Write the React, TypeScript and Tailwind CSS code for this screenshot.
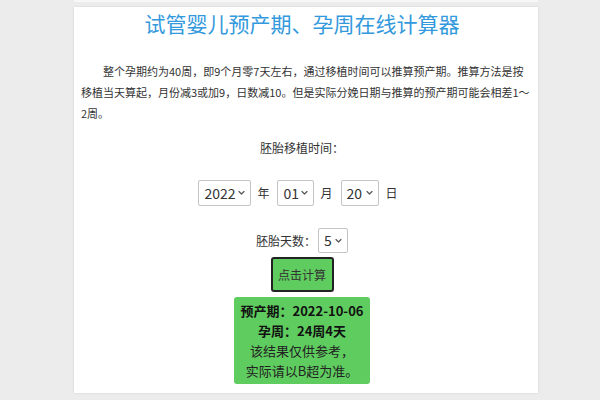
import { useState } from "react";

const cjk = "font-['Noto_Sans_CJK_SC','Microsoft_YaHei',sans-serif]";

function Chevron() {
  return (
    <svg width="7" height="5" viewBox="0 0 7 5" className="pointer-events-none absolute right-[6px] top-1/2 -translate-y-1/2">
      <path d="M1 1l2.5 2.5L6 1" fill="none" stroke="#555" strokeWidth="1.2" strokeLinecap="round" strokeLinejoin="round" />
    </svg>
  );
}

interface DropdownProps {
  value: string;
  options: string[];
  width: string;
  height: string;
  onChange: (value: string) => void;
}

function Dropdown({ value, options, width, height, onChange }: DropdownProps) {
  return (
    <span className={`relative inline-block ${width} ${height}`}>
      <select
        value={value}
        onChange={(e) => onChange(e.target.value)}
        className={`h-full w-full appearance-none rounded-[2px] border border-[#c4c4c4] bg-white pl-[5px] text-[14px] text-[#333] outline-none ${cjk}`}
      >
        {options.map((opt) => (
          <option key={opt} value={opt}>
            {opt}
          </option>
        ))}
      </select>
      <Chevron />
    </span>
  );
}

const pad = (n: number) => String(n).padStart(2, "0");

export default function App() {
  const [year, setYear] = useState("2022");
  const [month, setMonth] = useState("01");
  const [day, setDay] = useState("20");
  const [embryoDays, setEmbryoDays] = useState("5");

  const years = ["2020", "2021", "2022", "2023"];
  const months = Array.from({ length: 12 }, (_, i) => pad(i + 1));
  const days = Array.from({ length: 31 }, (_, i) => pad(i + 1));

  return (
    <div className={`h-[400px] w-[600px] overflow-hidden bg-[#ececec] ${cjk}`}>
      <div className="ml-[74px] h-[2px] w-[464px] bg-[#f7f7f7]" />
      <div className="ml-[74px] mt-[5px] h-[386px] w-[464px] bg-white pl-[7px] pr-[15px] shadow-[0_0_2px_rgba(0,0,0,0.12)]">
        <h1 className="text-center text-[21px] font-normal leading-[32px] text-[#3399dd]">
          试管婴儿预产期、孕周在线计算器
        </h1>

        <p className="mt-[22px] -mr-[8px] indent-[22px] text-[11px] leading-[21px] text-[#333]">
          整个孕期约为40周，即9个月零7天左右，通过移植时间可以推算预产期。推算方法是按
          <br />
          移植当天算起，月份减3或加9，日数减10。但是实际分娩日期与推算的预产期可能会相差1～
          <br />
          2周。
        </p>

        <p className="mt-[14px] text-center text-[12px] leading-[20px] text-[#333]">胚胎移植时间：</p>

        <div className="mt-[22px] flex items-center justify-center pr-[8px] text-[12px] text-[#333]">
          <Dropdown value={year} options={years} width="w-[53px]" height="h-[26px]" onChange={setYear} />
          <span className="ml-[6px] mr-[8px]">年</span>
          <Dropdown value={month} options={months} width="w-[37px]" height="h-[26px]" onChange={setMonth} />
          <span className="ml-[6px] mr-[8px]">月</span>
          <Dropdown value={day} options={days} width="w-[38px]" height="h-[26px]" onChange={setDay} />
          <span className="ml-[7px]">日</span>
        </div>

        <div className="mt-[22px] flex items-center justify-center text-[12px] text-[#333]">
          <span className="mr-[2px]">胚胎天数：</span>
          <Dropdown value={embryoDays} options={["3", "5"]} width="w-[30px]" height="h-[25px]" onChange={setEmbryoDays} />
        </div>

        <div className="mt-[4px] flex justify-center">
          <button className="h-[35px] w-[63px] rounded-[3px] border-2 border-[#222] bg-[#5fcc5f] text-[12px] text-[#333]">
            点击计算
          </button>
        </div>

        <div className="mt-[5px] flex justify-center">
          <div className="w-[136px] rounded-[3px] bg-[#5fcc5f] pb-[3px] pt-[4px] text-center text-[13px] leading-[20px] text-[#222]">
            <p className="font-bold text-[#111]">预产期：2022-10-06</p>
            <p className="font-bold text-[#111]">孕周：24周4天</p>
            <p>该结果仅供参考，</p>
            <p>实际请以B超为准。</p>
          </div>
        </div>
      </div>
    </div>
  );
}
